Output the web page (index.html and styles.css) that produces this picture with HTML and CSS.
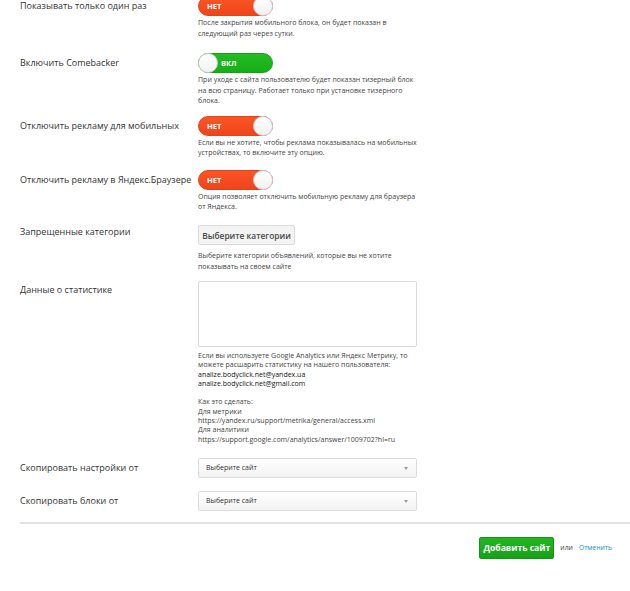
FILE: index.html
```html
<!DOCTYPE html>
<html lang="ru">
<head>
    <meta charset="UTF-8">
    <meta name="viewport" content="width=device-width, initial-scale=1.0">
    <title>Добавить сайт</title>
    <link rel="stylesheet" href="styles.css">
</head>
<body>
    <form class="site-form">
        <div class="row row-first">
            <div class="label">Показывать только один раз</div>
            <div class="field">
                <div class="switch off"><span class="switch-text">НЕТ</span><span class="knob"></span></div>
                <div class="hint">После закрытия мобильного блока, он будет показан в следующий раз через сутки.</div>
            </div>
        </div>

        <div class="row row-mid">
            <div class="label">Включить Comebacker</div>
            <div class="field">
                <div class="switch on"><span class="knob"></span><span class="switch-text">ВКЛ</span></div>
                <div class="hint">При уходе с сайта пользователю будет показан тизерный блок на всю страницу. Работает только при установке тизерного блока.</div>
            </div>
        </div>

        <div class="row">
            <div class="label">Отключить рекламу для мобильных</div>
            <div class="field">
                <div class="switch off"><span class="switch-text">НЕТ</span><span class="knob"></span></div>
                <div class="hint">Если вы не хотите, чтобы реклама показывалась на мобильных устройствах, то включите эту опцию.</div>
            </div>
        </div>

        <div class="row row-mid">
            <div class="label">Отключить рекламу в Яндекс.Браузере</div>
            <div class="field">
                <div class="switch off"><span class="switch-text">НЕТ</span><span class="knob"></span></div>
                <div class="hint">Опция позволяет отключить мобильную рекламу для браузера от Яндекса.</div>
            </div>
        </div>

        <div class="row row-mid">
            <div class="label">Запрещенные категории</div>
            <div class="field">
                <button type="button" class="btn-light">Выберите категории</button>
                <div class="hint hint-btn">Выберите категории объявлений, которые вы не хотите показывать на своем сайте</div>
            </div>
        </div>

        <div class="row row-stats">
            <div class="label label-top">Данные о статистике</div>
            <div class="field">
                <textarea class="stats"></textarea>
                <div class="hint hint-long">
                    Если вы используете Google Analytics или Яндекс Метрику, то можете расшарить статистику на нашего пользователя:<br>
                    <span class="mail">analize.bodyclick.net@yandex.ua</span><br>
                    <span class="mail">analize.bodyclick.net@gmail.com</span><br>
                    <br>
                    Как это сделать:<br>
                    Для метрики<br>
                    https://yandex.ru/support/metrika/general/access.xml<br>
                    Для аналитики<br>
                    https://support.google.com/analytics/answer/1009702?hl=ru
                </div>
            </div>
        </div>

        <div class="row row-select">
            <div class="label">Скопировать настройки от</div>
            <div class="field">
                <div class="select">Выберите сайт<span class="arrow"></span></div>
            </div>
        </div>

        <div class="row row-select">
            <div class="label">Скопировать блоки от</div>
            <div class="field">
                <div class="select">Выберите сайт<span class="arrow"></span></div>
            </div>
        </div>

        <div class="actions">
            <button type="submit" class="btn-green">Добавить сайт</button>
            <span class="or">или</span>
            <a href="#" class="cancel">Отменить</a>
        </div>
    </form>
</body>
</html>
```

FILE: styles.css
```css
body {
    margin: 0;
    padding: 0;
    background: #fff;
    color: #333;
    font-family: "Open Sans", "Noto Sans", sans-serif;
}
.site-form {
    margin-top: -4px;
    padding-left: 20px;
}
.row {
    display: grid;
    grid-template-columns: 178px 220px;
    padding-bottom: 11px;
}
.row-first {
    padding-bottom: 14px;
}
.row-mid {
    padding-bottom: 9px;
}
.row-stats {
    padding-bottom: 14px;
}
.row-select {
    padding-bottom: 13px;
}
.label {
    font-size: 9px;
    line-height: 20px;
    color: #333;
}
.label-top {
    line-height: 17px;
}
.hint {
    margin-top: 2px;
    font-size: 7px;
    line-height: 10.5px;
    color: #444;
}
.hint-btn {
    margin-top: 6px;
}
.hint-long {
    margin-top: 4px;
    line-height: 9.3px;
}
.mail {
    color: #111;
}

/* переключатели НЕТ / ВКЛ */
.switch {
    width: 75px;
    height: 20px;
    border-radius: 10px;
    box-sizing: border-box;
    display: flex;
    align-items: center;
}
.switch.off {
    background: linear-gradient(#fb5424, #ee461b);
    border: 1px solid #e0441e;
}
.switch.on {
    background: linear-gradient(#22bd22, #17ad17);
    border: 1px solid #16a316;
}
.switch-text {
    color: #fff;
    font-size: 7.5px;
    font-weight: bold;
}
.switch.off .switch-text {
    margin-left: 8px;
}
.switch.on .switch-text {
    margin-left: 3px;
}
.knob {
    width: 20px;
    height: 20px;
    border-radius: 50%;
    background: linear-gradient(#fff, #f1f1f1);
    box-sizing: border-box;
    border: 1px solid #cfcfcf;
}
.switch.off .knob {
    margin-left: auto;
    margin-right: -1px;
}
.switch.on .knob {
    margin-left: -1px;
}

.btn-light {
    width: 97px;
    height: 20px;
    padding: 0;
    font-family: inherit;
    font-size: 8.4px;
    font-weight: 600;
    color: #4a4a4a;
    background: #f3f3f3;
    border: 1px solid #dcdcdc;
    border-radius: 2px;
}
.stats {
    display: block;
    width: 219px;
    height: 66px;
    margin: 0;
    box-sizing: border-box;
    border: 1px solid #d9d9de;
    border-radius: 2px;
    resize: none;
}
.select {
    position: relative;
    width: 219px;
    height: 20px;
    box-sizing: border-box;
    padding-left: 7px;
    border: 1px solid #dcdcdc;
    border-radius: 2px;
    background: linear-gradient(#fff, #f2f2f2);
    font-size: 7px;
    line-height: 18px;
    color: #333;
}
.arrow {
    position: absolute;
    right: 8px;
    top: 8px;
    border-left: 2.5px solid transparent;
    border-right: 2.5px solid transparent;
    border-top: 3px solid #999;
}

.actions {
    margin-top: -2px;
    border-top: 2px solid #e2e2e6;
    padding: 13px 18px 0 0;
    display: flex;
    justify-content: flex-end;
    align-items: center;
}
.btn-green {
    width: 75px;
    height: 22px;
    padding: 0;
    font-family: inherit;
    font-size: 8.6px;
    font-weight: bold;
    color: #fff;
    background: linear-gradient(#22b522, #16a316);
    border: 1px solid #139413;
    border-radius: 2px;
}
.or {
    margin-left: 6px;
    font-size: 6.8px;
    color: #444;
}
.cancel {
    margin-left: 6px;
    font-size: 6.8px;
    color: #1b8fc4;
    text-decoration: none;
}
```
